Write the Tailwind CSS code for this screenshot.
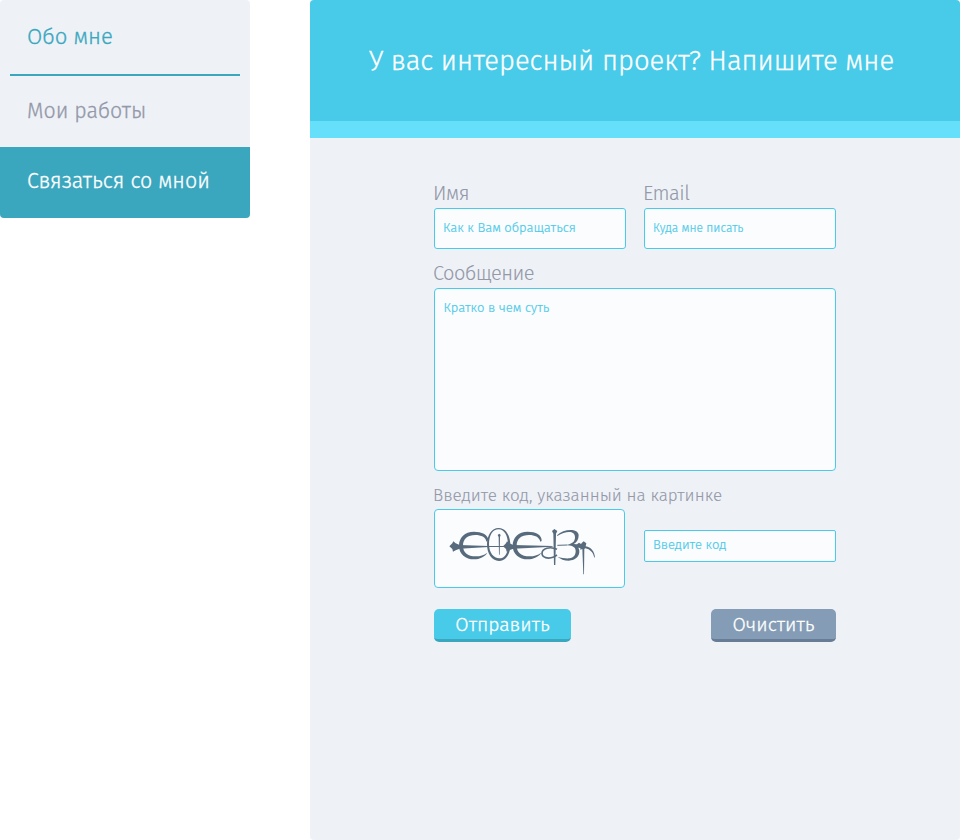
<!DOCTYPE html>
<html lang="ru">
<head>
<meta charset="utf-8">
<title>Связаться со мной</title>
<script src="https://cdn.jsdelivr.net/npm/@tailwindcss/browser@4"></script>
</head>
<body class="flex h-[840px] w-[960px] items-start gap-[60px] overflow-hidden bg-white font-['Fira_Sans_Book','Fira_Sans','Noto_Sans',sans-serif] font-light">
<nav class="flex h-[218px] w-[250px] shrink-0 flex-col overflow-hidden rounded bg-[#eef2f7] text-[21.4px] whitespace-nowrap [-webkit-text-stroke:0.3px]">
  <a class="mx-[10px] h-[76px] border-b-2 border-[#3ba7bf] pl-[17px] text-[22.1px] leading-[73px] text-[#3ba7bf]">Обо мне</a>
  <a class="h-[71px] pl-[27px] leading-[71px] text-[#9498a8]">Мои работы</a>
  <a class="h-[71px] bg-[#3ba7bf] pl-[27px] leading-[69px] text-white">Связаться со мной</a>
</nav>
<main class="h-[840px] w-[650px] shrink-0 overflow-hidden rounded bg-[#eef2f7]">
  <header class="h-[138px] border-b-[17px] border-[#66dffb] bg-[#48cae9] pl-[59px] text-[27.4px] leading-[121px] whitespace-nowrap text-white [-webkit-text-stroke:0.3px]"><h1 class="font-light">У вас интересный проект? Напишите мне</h1></header>
  <form class="ml-[124px] flex w-[402px] flex-col pt-[42px] text-[#9498a8]">
    <div class="flex gap-[18px]">
      <label class="block w-[192px]"><span class="-ml-px block h-[28px] text-[20px] leading-[27px] tracking-[-0.5px] [-webkit-text-stroke:0.1px]">Имя</span>
        <input class="block h-[41px] w-full rounded-[3px] border border-[#48cae9] bg-[#fbfcfe] px-2 pb-[2px] text-[13px] [-webkit-text-stroke:0.2px] placeholder:text-[#48cae9] placeholder:opacity-100" placeholder="Как к Вам обращаться"></label>
      <label class="block w-[192px]"><span class="-ml-px block h-[28px] text-[20px] leading-[27px] tracking-[-0.5px] [-webkit-text-stroke:0.1px]">Email</span>
        <input class="block h-[41px] w-full rounded-[3px] border border-[#48cae9] bg-[#fbfcfe] px-2 pb-[1px] text-[12px] [-webkit-text-stroke:0.2px] placeholder:text-[#48cae9] placeholder:opacity-100" placeholder="Куда мне писать"></label>
    </div>
    <label class="mt-[11px] block"><span class="-ml-px block h-[28px] text-[20px] leading-[27px] tracking-[-0.5px] [-webkit-text-stroke:0.1px]">Сообщение</span>
      <textarea class="block h-[183px] w-full resize-none rounded-[4px] border border-[#48cae9] bg-[#fbfcfe] px-[8.5px] py-[9px] text-[13px] leading-[20px] [-webkit-text-stroke:0.2px] placeholder:text-[#48cae9] placeholder:opacity-100" placeholder="Кратко в чем суть"></textarea></label>
    <p class="mt-[11px] -ml-px h-[27px] text-[17px] leading-[27px] whitespace-nowrap [-webkit-text-stroke:0.1px]">Введите код, указанный на картинке</p>
    <div class="flex items-start justify-between">
      <div class="h-[79px] w-[191px] rounded-[4px] border border-[#48cae9] bg-[#fbfcfe]">
        <svg class="block h-[77px] w-[189px]" viewBox="15 15 567 231" fill="#586b7d">
          <path d="M58 124l9-9 3-6 7 6 12 5 86 3v3l-86 5-12 5-8 4-2-8z"/>
          <path d="M175 105C174 88 155 80 132 80 104 80 87 98 87 122 87 147 107 163 132 163 149 163 165 155 172 143 161 151 151 154 138 154 112 154 99 142 99 122 99 102 113 90 136 90 153 90 168 96 169 110Z"/>
          <path d="M219 124l9-9 3-6 7 6 12 5 118 3v2l-118 6-12 5-8 4-2-8z"/>
          <path d="M335 108C336 89 317 80 293 80 265 80 248 98 248 122 248 147 268 163 293 163 310 163 327 155 334 143 322 151 312 154 299 154 273 154 260 142 260 122 260 102 274 90 297 90 314 90 328 96 331 110Z"/>
          <path fill-rule="evenodd" d="M206 69C185 69 171 91 171 118S185 168 207 168 241 146 241 119 227 69 206 69ZM206 73C224 73 234 94 234 119S225 160 208 160 177 143 177 117 188 73 206 73Z"/>
          <path d="M175 123h65v3h-65zM203 90l5-4 4 4-2 6-1 53h-2l-1-53zM366 78l7-6 9 6-4 8-2 94h-4l-2-94z"/>
          <path fill="none" stroke="#586b7d" stroke-width="5" d="M381 133C360 123 336 130 336 145 336 158 354 163 371 156L381 150"/>
          <path fill="none" stroke="#586b7d" stroke-width="3" d="M382 121L412 120"/>
          <path d="M381 91C401 71 445 69 446 91 446 104 440 113 430 118 442 120 449 130 448 142 446 158 433 166 417 167 403 167 391 162 382 155 394 158 406 161 418 160 431 158 437 150 437 139 437 128 430 122 412 121v-2C429 116 435 108 435 97 435 76 408 77 382 93Z"/>
          <path d="M425 117l16 1 6-5 6 4 3-4 5-4 8 6-2 9c16 3 27 15 28 35l-3-4c-3-13-12-22-26-25l-3 2-1 76h-2l-3-76-6 2v-5l-7-1-7 1-4-4-8-3z"/>
        </svg>
      </div>
      <input class="mt-[21px] block h-[32px] w-[192px] rounded-[2px] border border-[#48cae9] bg-[#fbfcfe] px-2 pb-[3px] text-[13px] [-webkit-text-stroke:0.2px] placeholder:text-[#48cae9] placeholder:opacity-100" placeholder="Введите код">
    </div>
    <div class="mt-[21px] flex justify-between text-[19.3px] text-white [-webkit-text-stroke:0.3px]">
      <button type="button" class="h-[33px] w-[137px] rounded-[5px] border-b-[3px] border-[#3ba7bf] bg-[#48cae9] pt-px leading-[29px]">Отправить</button>
      <button type="button" class="h-[33px] w-[125px] rounded-[5px] border-b-[3px] border-[#677c95] bg-[#849cb5] pt-px leading-[29px]">Очистить</button>
    </div>
  </form>
</main>
</body>
</html>
